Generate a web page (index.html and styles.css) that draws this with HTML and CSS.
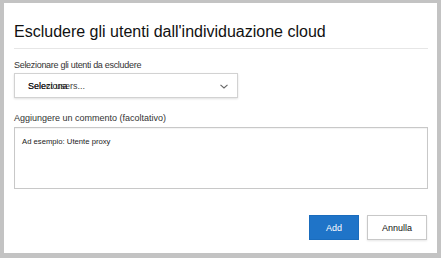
FILE: index.html
```html
<!DOCTYPE html>
<html lang="it">
<head>
    <meta charset="UTF-8">
    <meta name="viewport" content="width=device-width, initial-scale=1.0">
    <title>Escludere gli utenti</title>
    <link rel="stylesheet" href="styles.css">
</head>
<body>
    <div class="dialog">
        <h1 class="dialog-title">Escludere gli utenti dall'individuazione cloud</h1>

        <label class="field-label users-label">Selezionare gli utenti da escludere</label>
        <div class="select-box">
            <span class="select-text">
                <span class="placeholder">Select users...</span>
                <span class="placeholder-over">Seleziona</span>
            </span>
            <svg class="chevron" width="8" height="5" viewBox="0 0 8 5">
                <path d="M0.5 0.8 L4 4 L7.5 0.8" fill="none" stroke="#666" stroke-width="1.1"/>
            </svg>
        </div>

        <label class="field-label comment-label">Aggiungere un commento (facoltativo)</label>
        <div class="comment-box">Ad esempio: Utente proxy</div>

        <div class="actions">
            <button class="btn btn-primary">Add</button>
            <button class="btn btn-default">Annulla</button>
        </div>
    </div>
</body>
</html>
```

FILE: styles.css
```css
* {
    margin: 0;
    padding: 0;
    box-sizing: border-box;
}

body {
    font-family: 'Liberation Sans', Arial, sans-serif;
    background: #c3c3c3;
    width: 441px;
    height: 258px;
    overflow: hidden;
    padding: 3px 4px 5px 4px;
}

.dialog {
    background: white;
    height: 250px;
    padding: 0 9px 0 10px;
    display: flex;
    flex-direction: column;
    color: #222;
}

.dialog-title {
    font-size: 16px;
    font-weight: normal;
    color: #111;
    padding-top: 20px;
    padding-bottom: 7px;
    line-height: 18px;
    border-bottom: 1px solid #e6e6e6;
}

.field-label {
    font-size: 9px;
    color: #333;
    line-height: 10px;
}

.users-label {
    margin-top: 11px;
    letter-spacing: -0.3px;
}

.select-box {
    width: 224px;
    height: 25px;
    margin-top: 3px;
    border: 1px solid #d2d2d2;
    box-shadow: 0 1px 2px rgba(0, 0, 0, 0.12);
    display: flex;
    align-items: center;
    justify-content: space-between;
    padding: 0 9px 0 13px;
}

.select-text {
    position: relative;
    font-size: 9px;
    color: #444;
}

.placeholder-over {
    position: absolute;
    left: 0;
    top: 0;
    color: #111;
}

.chevron {
    margin-top: 1px;
}

.comment-label {
    margin-top: 15px;
}

.comment-box {
    height: 62px;
    margin-top: 4px;
    border: 1px solid #c8c8c8;
    box-shadow: inset 0 1px 1px rgba(0, 0, 0, 0.05);
    padding: 9px 7px;
    font-size: 7.7px;
    color: #222;
}

.actions {
    display: flex;
    justify-content: flex-end;
    gap: 8px;
    margin-top: 26px;
    padding-right: 1px;
}

.btn {
    height: 25px;
    font-family: 'Liberation Sans', Arial, sans-serif;
    font-size: 9px;
    cursor: pointer;
}

.btn-primary {
    width: 50px;
    background: #1f74c8;
    color: white;
    border: 1px solid #1a6cbd;
}

.btn-default {
    width: 60px;
    background: white;
    color: #111;
    border: 1px solid #c8c8c8;
    box-shadow: 0 1px 2px rgba(0, 0, 0, 0.1);
}
```
